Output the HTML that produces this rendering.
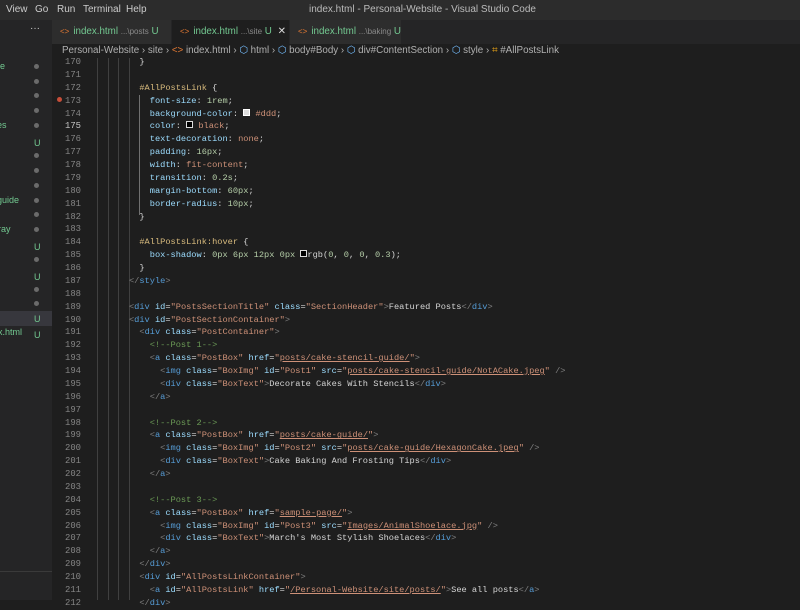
<!DOCTYPE html>
<html><head><style>
*{margin:0;padding:0;box-sizing:border-box}
body{width:800px;height:600px;overflow:hidden;background:#1e1e1e;font-family:"Liberation Sans",sans-serif;position:relative}
.title{position:absolute;left:0;top:0;width:800px;height:20px;background:#2c2c2c;color:#ccc;font-size:10px}
.title span{position:absolute;top:4px}
.side{position:absolute;left:0;top:20px;width:52px;height:580px;background:#252526}
.tabs{position:absolute;left:52px;top:20px;width:748px;height:24px;background:#252526}
.tab{position:absolute;top:0;height:24px;font-size:9.8px;color:#73c991;padding:6px 0 0 8px;background:#2d2d2d;border-right:1px solid #252526}
.tab i{font-style:normal;color:#e37933;margin-right:4px;font-size:8px}
.tab small{font-size:8px;color:#8a8a8a}
.crumb{position:absolute;left:52px;top:44px;height:14px;width:748px;font-size:9.8px;color:#b0b0b0;padding:1px 0 0 10px;white-space:nowrap}
.code{position:absolute;left:108.2px;top:56px;font-family:"Liberation Mono",monospace;font-size:8.67px;line-height:12.88px;white-space:pre;color:#d4d4d4}
.ln{position:absolute;left:55px;width:26px;top:56px;font-family:"Liberation Mono",monospace;font-size:8.9px;line-height:12.88px;color:#858585;text-align:right;white-space:pre}
.s{color:#d7ba7d}.p{color:#9cdcfe}.v{color:#ce9178}.n{color:#b5cea8}.t{color:#569cd6}.a{color:#9cdcfe}.g{color:#808080}.c{color:#6a9955}.u{text-decoration:underline}
.guide{position:absolute;top:58px;height:542px;width:1px;background:#404040}
.sr{position:absolute;left:0;width:52px;height:15px;font-size:9px;color:#73c991}
.sr b{position:absolute;left:34px;top:3px;font-weight:normal;color:#73c991;font-size:9px}
.dot{position:absolute;left:34px;width:5px;height:5px;border-radius:50%;background:#6b6b6b}
</style></head><body>
<div class="title"><span style="left:6px">View</span><span style="left:35px">Go</span><span style="left:57px">Run</span><span style="left:83px">Terminal</span><span style="left:126px">Help</span><span style="left:309px;color:#bbb">index.html - Personal-Website - Visual Studio Code</span></div>
<div class="side">
<div style="position:absolute;left:30px;top:3px;color:#ccc;font-size:10px">···</div>
</div>
<div class="sr" style="top:61px">e</div><div class="dot" style="top:64px"></div>
<div class="dot" style="top:79px"></div><div class="dot" style="top:93px"></div><div class="dot" style="top:108px"></div>
<div class="sr" style="top:120px;left:-8px">ges</div><div class="dot" style="top:123px"></div>
<div class="sr" style="top:135px"><b>U</b></div>
<div class="dot" style="top:153px"></div><div class="dot" style="top:168px"></div><div class="dot" style="top:183px"></div>
<div class="sr" style="top:195px;left:-3px">guide</div><div class="dot" style="top:198px"></div>
<div class="dot" style="top:212px"></div>
<div class="sr" style="top:224px;left:-2px">ray</div><div class="dot" style="top:227px"></div>
<div class="sr" style="top:239px"><b>U</b></div><div class="dot" style="top:257px"></div>
<div class="sr" style="top:269px"><b>U</b></div><div class="dot" style="top:287px"></div><div class="dot" style="top:301px"></div>
<div class="sr" style="top:311px;background:#37373d"><b>U</b></div>
<div class="sr" style="top:327px;left:-2px;width:54px">x.html<b style="left:36px">U</b></div>
<div style="position:absolute;left:0;top:571px;width:52px;height:1px;background:#3a3a3a"></div>
<div class="tabs">
<div class="tab" style="left:0;width:120px"><i>&lt;&gt;</i>index.html <small>...\posts</small> U</div>
<div class="tab" style="left:120px;width:118px;background:#1e1e1e"><i>&lt;&gt;</i>index.html <small>...\site</small> U <span style="color:#ddd;margin-left:3px">✕</span></div>
<div class="tab" style="left:238px;width:112px"><i>&lt;&gt;</i>index.html <small>...\baking</small> U</div>
</div>
<div class="crumb">Personal-Website › site › <span style="color:#e37933">&lt;&gt;</span> index.html › <span style="color:#75beff">⬡</span> html › <span style="color:#75beff">⬡</span> body#Body › <span style="color:#75beff">⬡</span> div#ContentSection › <span style="color:#75beff">⬡</span> style › <span style="color:#e8a317">⌗</span> #AllPostsLink</div>
<div class="guide" style="left:97px"></div><div class="guide" style="left:108px"></div><div class="guide" style="left:118px"></div><div class="guide" style="left:129px"></div>
<div class="guide" style="left:139px;top:95px;height:120px;background:#707070"></div>
<div style="position:absolute;left:57px;top:97px;width:5px;height:5px;border-radius:50%;background:#c74e39"></div>
<div class="ln">170
171
172
173
174
<span style="color:#c6c6c6">175</span>
176
177
178
179
180
181
182
183
184
185
186
187
188
189
190
191
192
193
194
195
196
197
198
199
200
201
202
203
204
205
206
207
208
209
210
211
212</div>
<div class="code">      }

      <span class="s">#AllPostsLink</span> {
        <span class="p">font-size</span>: <span class="n">1rem</span>;
        <span class="p">background-color</span>: <span style="display:inline-block;width:7px;height:7px;background:#ddd;border:1px solid #fff"></span> <span class="v">#ddd</span>;
        <span class="p">color</span>: <span style="display:inline-block;width:7px;height:7px;background:#000;border:1px solid #ddd"></span> <span class="v">black</span>;
        <span class="p">text-decoration</span>: <span class="v">none</span>;
        <span class="p">padding</span>: <span class="n">16px</span>;
        <span class="p">width</span>: <span class="v">fit-content</span>;
        <span class="p">transition</span>: <span class="n">0.2s</span>;
        <span class="p">margin-bottom</span>: <span class="n">60px</span>;
        <span class="p">border-radius</span>: <span class="n">10px</span>;
      }

      <span class="s">#AllPostsLink:hover</span> {
        <span class="p">box-shadow</span>: <span class="n">0px 6px 12px 0px</span> <span style="display:inline-block;width:7px;height:7px;background:#000;border:1px solid #ddd"></span>rgb(<span class="n">0</span>, <span class="n">0</span>, <span class="n">0</span>, <span class="n">0.3</span>);
      }
    <span class="g">&lt;/</span><span class="t">style</span><span class="g">&gt;</span>

    <span class="g">&lt;</span><span class="t">div</span> <span class="a">id</span>=<span class="v">"PostsSectionTitle"</span> <span class="a">class</span>=<span class="v">"SectionHeader"</span><span class="g">&gt;</span>Featured Posts<span class="g">&lt;/</span><span class="t">div</span><span class="g">&gt;</span>
    <span class="g">&lt;</span><span class="t">div</span> <span class="a">id</span>=<span class="v">"PostSectionContainer"</span><span class="g">&gt;</span>
      <span class="g">&lt;</span><span class="t">div</span> <span class="a">class</span>=<span class="v">"PostContainer"</span><span class="g">&gt;</span>
        <span class="c">&lt;!--Post 1--&gt;</span>
        <span class="g">&lt;</span><span class="t">a</span> <span class="a">class</span>=<span class="v">"PostBox"</span> <span class="a">href</span>=<span class="v">"<span class="u">posts/cake-stencil-guide/</span>"</span><span class="g">&gt;</span>
          <span class="g">&lt;</span><span class="t">img</span> <span class="a">class</span>=<span class="v">"BoxImg"</span> <span class="a">id</span>=<span class="v">"Post1"</span> <span class="a">src</span>=<span class="v">"<span class="u">posts/cake-stencil-guide/NotACake.jpeg</span>"</span> <span class="g">/&gt;</span>
          <span class="g">&lt;</span><span class="t">div</span> <span class="a">class</span>=<span class="v">"BoxText"</span><span class="g">&gt;</span>Decorate Cakes With Stencils<span class="g">&lt;/</span><span class="t">div</span><span class="g">&gt;</span>
        <span class="g">&lt;/</span><span class="t">a</span><span class="g">&gt;</span>

        <span class="c">&lt;!--Post 2--&gt;</span>
        <span class="g">&lt;</span><span class="t">a</span> <span class="a">class</span>=<span class="v">"PostBox"</span> <span class="a">href</span>=<span class="v">"<span class="u">posts/cake-guide/</span>"</span><span class="g">&gt;</span>
          <span class="g">&lt;</span><span class="t">img</span> <span class="a">class</span>=<span class="v">"BoxImg"</span> <span class="a">id</span>=<span class="v">"Post2"</span> <span class="a">src</span>=<span class="v">"<span class="u">posts/cake-guide/HexagonCake.jpeg</span>"</span> <span class="g">/&gt;</span>
          <span class="g">&lt;</span><span class="t">div</span> <span class="a">class</span>=<span class="v">"BoxText"</span><span class="g">&gt;</span>Cake Baking And Frosting Tips<span class="g">&lt;/</span><span class="t">div</span><span class="g">&gt;</span>
        <span class="g">&lt;/</span><span class="t">a</span><span class="g">&gt;</span>

        <span class="c">&lt;!--Post 3--&gt;</span>
        <span class="g">&lt;</span><span class="t">a</span> <span class="a">class</span>=<span class="v">"PostBox"</span> <span class="a">href</span>=<span class="v">"<span class="u">sample-page/</span>"</span><span class="g">&gt;</span>
          <span class="g">&lt;</span><span class="t">img</span> <span class="a">class</span>=<span class="v">"BoxImg"</span> <span class="a">id</span>=<span class="v">"Post3"</span> <span class="a">src</span>=<span class="v">"<span class="u">Images/AnimalShoelace.jpg</span>"</span> <span class="g">/&gt;</span>
          <span class="g">&lt;</span><span class="t">div</span> <span class="a">class</span>=<span class="v">"BoxText"</span><span class="g">&gt;</span>March's Most Stylish Shoelaces<span class="g">&lt;/</span><span class="t">div</span><span class="g">&gt;</span>
        <span class="g">&lt;/</span><span class="t">a</span><span class="g">&gt;</span>
      <span class="g">&lt;/</span><span class="t">div</span><span class="g">&gt;</span>
      <span class="g">&lt;</span><span class="t">div</span> <span class="a">id</span>=<span class="v">"AllPostsLinkContainer"</span><span class="g">&gt;</span>
        <span class="g">&lt;</span><span class="t">a</span> <span class="a">id</span>=<span class="v">"AllPostsLink"</span> <span class="a">href</span>=<span class="v">"<span class="u">/Personal-Website/site/posts/</span>"</span><span class="g">&gt;</span>See all posts<span class="g">&lt;/</span><span class="t">a</span><span class="g">&gt;</span>
      <span class="g">&lt;/</span><span class="t">div</span><span class="g">&gt;</span></div>
</body></html>
